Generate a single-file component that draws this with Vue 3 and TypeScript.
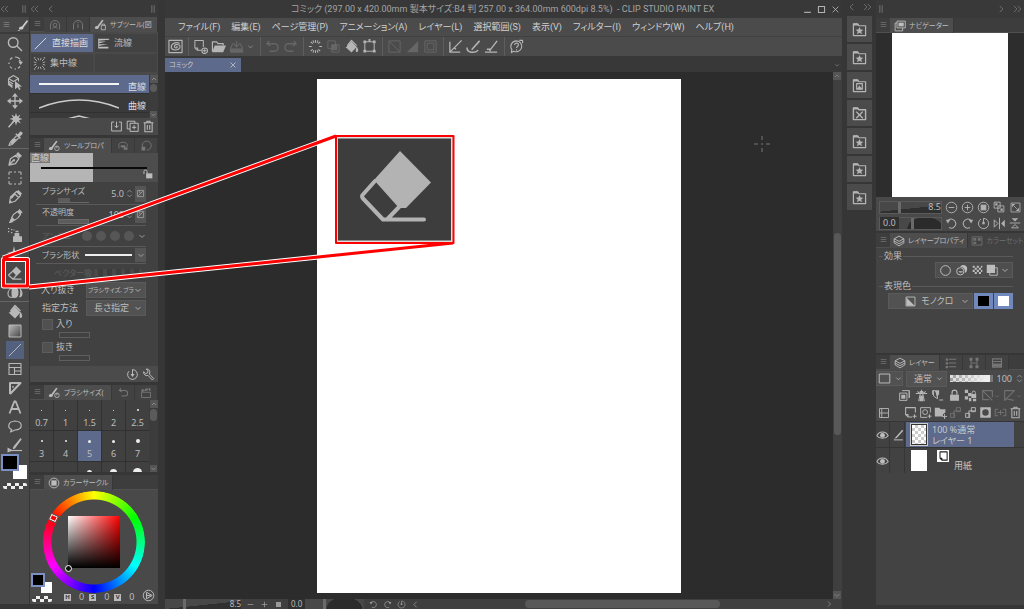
<script setup lang="ts">
import { h, ref } from 'vue'

// Each glyph: stroked path, filled path, stroke width; drawn on a 16 x 16 grid.
type Glyph = [string, string?, number?]

const glyphs: Record<string, Glyph> = {
  search: ['M11 6.5a4.8 4.8 0 1 1-9.6 0a4.8 4.8 0 1 1 9.6 0M10 10l5 5', '', 1.4],
  rotate: ['M12.9 4.2A6 6 0 0 0 8 2M5.4 2.6A6 6 0 0 0 3 4.6M2 7.500V9M3 11.500A6 6 0 0 0 5 13.300M7.500 14H9M11 13.200A6 6 0 0 0 13 11.300', 'M11.500 6.800h4.500L13.700 10zM12.500 4.500l3 2.500h-4z', 1.2],
  cubeArrow: ['M1.500 4.500L6.500 1.500l5 3v3M1.500 4.500l5 3l5-3M1.500 4.500v6l4 3M1.500 7l4.500 3M1.500 9l4 3', 'M8 7l7 5.500l-3 .3l1.600 2.400l-1.500.8l-1.400-2.700L8 15.300z', 1.1],
  move: ['M8 2.500v11M2.500 8h11', 'M8 0l3 3.700H5zM8 16l3-3.700H5zM0 8l3.700-3v6zM16 8l-3.700-3v6z', 1.3],
  wand: ['M8 8L1.500 15.300', 'M9 1l1.200 3.400L13.500 2.500l-1.800 3.300L15.500 7l-3.600 1.200l1.900 3.300l-3.500-1.800L9 13.500L7.800 9.800L4.500 11l1.600-3L2.500 7l3.600-1.200L4.300 2.500l3.500 1.900z', 1.5],
  picker: ['M9.500 5L3.300 11.200L2 14.500l3-1L11.500 7', 'M8.200 3.200l1.200-1l1.300 1.200l2-2.300a1.700 1.700 0 0 1 2.400 2.400L12.800 5.600L14 7l-1.200 1zM5 8h5L5.500 12.800L3.500 13z', 1.2],
  nib: ['M2 14l1.500-6.300L8.700 4.300l3.200 3.300L8.500 12.600zM2 14l4.500-4.700', 'M9 3.600L11 1l4 4l-2.500 2zM6 8.200h2v2H6z', 1.3],
  marquee: ['M2 5V2h3M7 2h2M11 2h3v3M14 7v2M14 11v3h-3M9 14H7M5 14H2v-3M2 9V7', '', 1],
  pencil: ['M2.500 14l1-6L9.500 2.500l4 4L8 12.300zM7.500 4.500l4 4', 'M2.500 14l.6-3l2.200 2.200zM9.500 2.500L11.400 1L15 4.500l-1.500 2zM3.500 8l4-3.500l1 1L4.500 10z', 1.2],
  brush: ['M4.800 9.500c.8-2 3-4.500 5.700-6l3 3c-1.500 2.700-4 4.900-6 5.700z', 'M4.700 9.600l2.700 2.600c-1 2-3.500 2.800-5.600 2.800c1-1.200.8-3 2.900-5.400zM10.500 3.500l1.900-2.500l3.200 3.200l-2.300 2z', 1.2],
  spray: ['M6 12h9', 'M7.500 6h4.800v3.200H15V15H6V9.200h1.500zM8.500 3.800h3v1.500h-3zM1 1h1.300v1.300H1zM4 2h1.300v1.300H4zM1 4h1.300v1.300H1zM4 5h1.300v1.300H4zM6.500 2.500h1v1h-1z', .6],
  sparkle: ['', 'M7 0l1.300 5.500L14 7L8.300 8.500L7 14L5.700 8.500L0 7l5.700-1.500zM12.500 10l.7 2.300L15.500 13l-2.300.7l-.7 2.300l-.7-2.300L9.500 13l2.300-.7z'],
  eraser: ['M6 6L1.500 10L6 14.200L9.700 10M6 14.200h8.500', 'M9.200 1.500L14.300 6.500L9.700 11L5 6z', 1.2],
  blend: ['M6.500 3.500C3 4 1 7 1 9.800C1 13 3.500 14 6 13', 'M6 3c4-.5 5.500 1.800 5.500 5.500S10 14 7.500 14S4.500 12 4.500 9S4.500 4.500 6 3zM12.500 4c2 1 3.200 3.500 3 6s-1.500 3.500-3.500 3.300c1.500-2.500 1.600-6.500.5-9.300z', 1.1],
  bucket: ['M3.500 7L8 1.500l5.500 5.500', 'M1.500 8.500h12L8 14.500zM8 2.500l5.500 6H2.500zM13.500 8c2 2.300 2.200 5 .8 5.800s-2.200-1-1.600-3z', 1.3],
  gradient: ['M2 2h12v12H2z', '', 1],
  lineTool: ['M2 14L14 2', '', 1],
  frame: ['M2 2.500h12v11H2zM2 6.500h12M7.500 6.500v7M7.500 10H14', '', 1.1],
  ruler: ['M3 14V3h10.500L3 14M6 6.300V7.500', '', 2],
  letter: ['M2.500 14.500L7.300 2.500h1.400l4.800 12M4.500 10h7', '', 1.8],
  balloon: ['M4.700 11.500C.3 10 .5 3.500 8 3c8.300.5 8.300 8.500 0 9l-4.500 2z', '', 1.2],
  lineFix: ['M1.500 13.500H15', 'M13.500 1l1.200 1.200L8 11.500l-2.200.7l.5-2.500zM.5 10.500v5l5.500-2z', 1.2],
  pen: ['M1 15.500l3-.6', 'M2.500 13.500c0-3 2-4 4-3.500l6.500-8.500l2 1.200L8.800 11c0 3-2.800 3.700-6.300 2.500z', 1],
  knobPen: ['M13.800 11.500a2.800 2.800 0 1 1-5.600 0a2.800 2.800 0 1 1 5.600 0M11 8.500v3', 'M1 13c0-2.300 1.400-3.300 3-3L10 2l1.800 1.200L6 11c0 2.500-2.400 3-5 2z', 1],
  bagPen: ['M9 9h5v5.500H9zM10 9V7.500h3V9', 'M1 13c0-2.300 1.400-3.300 3-3L10 2l1.800 1.200L6 11c0 2.500-2.400 3-5 2z', 1],
  menu: ['M3 4.500h10M3 8h10M3 11.500h10', '', 1],
  info: ['M2 14V8a6 6 0 0 1 12 0v6M8 7v5M8 4v1.500', '', 1.3],
  head: ['M2 14V8a6 6 0 0 1 12 0v6M10.500 8a2.500 2.500 0 1 1-5 0a2.500 2.500 0 1 1 5 0M4.500 13l2-2h3l2 2', '', 1.2],
  flow: ['M2 2v12', 'M2 2h13v1.500L2 4.500zM2 5.500h9L2 8zM2 9h11L2 11zM2 12h12v2H2z', 1],
  burst: ['M2 2l3 3M14 2l-3 3M2 14l3-3M14 14l-3-3M6 1l1 3M10 1L9 4M6 15l1-3M10 15l-1-3M1 6l3 1M1 10l3-1M15 6l-3 1M15 10l-3-1M1 1h2M13 1h2M1 15h2M13 15h2', '', 1],
  importBox: ['M5 2.500H2v11h12v-11h-3M8 2v7M5.500 7L8 9.500L10.500 7', '', 1.2],
  duplicate: ['M5 4h10v10H5zM11 4V1.500H1.500V11H5M10 6.500v5M7.500 9h5', '', 1.2],
  trash: ['M2 3.500h12M6 3.500v-2h4v2M3.500 4v10.500h9V4M6.500 6v6M9.500 6v6', '', 1.3],
  up: ['M4 10l4-4l4 4', '', 1.5],
  down: ['M3 6l5 5l5-5', '', 1.7],
  updown: ['M4 6l4-4l4 4M4 10l4 4l4-4', '', 1.5],
  left: ['M10 3L5 8l5 5', '', 1.4],
  right: ['M6 3l5 5l-5 5', '', 1.4],
  dleft: ['M7 3L2 8l5 5M13 3L8 8l5 5', '', 1.3],
  dright: ['M3 3l5 5l-5 5M9 3l5 5l-5 5', '', 1.3],
  grip: ['M5.500 2v12M8 2v12M10.500 2v12', '', 1],
  lock: ['M1.500 8V4a2.500 2.500 0 0 1 5 0v4', 'M5 7h10v8H5z', 1.5],
  dynamic: ['M2.500 2.500h11v11h-11zM4 12l8-8M5 5h2v2', '', 1.3],
  reset: ['M3.500 4A6 6 0 1 0 8 2M8 2v7', 'M5.500 7.500h5L8 11z', 1.2],
  wrench: ['M9 7.500l5.500 5.500l-1.700 1.800L7.500 9.200C4.500 10 1.500 8 2 4.500L4.500 7L7 5.800L7.300 3L5 1.500c3-1 6 2 4 6z', '', 1.2],
  undo: ['M4.500 2L2 5l3.500 2.500M2.500 5H10a4 4 0 0 1 0 8H5', '', 1.5],
  redo: ['M11.500 2L14 5l-3.500 2.500M13.500 5H6a4 4 0 0 0 0 8h5', '', 1.5],
  clap: ['M2 7h12v7H2zM2 6l11-4', 'M2 3h3v3H2zM7 2h3v3H7zM12 2h2v3h-2z', 1.2],
  wheel: ['M14.500 8A6.500 6.500 0 1 1 1.500 8A6.500 6.500 0 1 1 14.500 8', 'M4.500 4.500h7v7h-7z', 1.2],
  play: ['M14.500 8A6.500 6.500 0 1 1 1.500 8A6.500 6.500 0 1 1 14.500 8M5.500 4l7 4l-7 4zM5.500 8h5', '', 1.2],
  spiral: ['M1 1.500h14v13H1zM12.500 4.500C7 2.500 3 5.500 3.500 9s7.500 3.500 9 .5S11 5.500 8.500 6S6.500 9.500 8.500 9.500S10 8 9 7.800', '', 1.2],
  newPage: ['M9 12H4.500L2 9.500V1.500h9v7M2 9.500h3V12M12.500 10.500v4M10.500 12.500h4M15.500 12.500a3 3 0 1 1-6 0a3 3 0 1 1 6 0', '', 1.1],
  open: ['M1.500 13V3H6l1.500 2H13v2', 'M1 14L4 7h12l-3 7z', 1.3],
  save: ['M1.500 10v4h13v-4M1.500 10L4 5h2M14.500 10L12 5h-2M8 2v6M5.500 6L8 8.500L10.500 6', 'M2 10h12v4H2z', 1.2],
  spinner: ['M8 1v3M8 12v3M1 8h3M12 8h3M3 3l2 2M11 11l2 2M13 3l-2 2M5 11l-2 2M5.300 1.500l1 2.600M10.700 14.500l-1-2.600M10.700 1.500l-1 2.600M5.300 14.500l1-2.600', '', 1.1],
  shapes: ['M2 2h8v8H2zM6 6h8v8H6z', 'M6 6h6v6H6z', 1],
  crop: ['M3 4.500V12M13 4.500V12M4.500 3h7M4.500 13h7', 'M1.500 1.500h3v3h-3zM11.500 1.500h3v3h-3zM1.500 11.500h3v3h-3zM11.500 11.500h3v3h-3zM7 0h2v3H7z', 1.1],
  slash: ['M2 2h12v12H2zM2 2l12 12', '', 1],
  half: ['', 'M14 2v12H2z', .6],
  square: ['M2 2h12v12H2zM4.500 4.500h7v7h-7z', '', 1],
  rulerPen: ['M2 3v11h11M2 14L14.500 1.500M6.500 9l2 2', '', 1.4],
  curvePen: ['M1 9c0 6 8 6.500 12 3M6 11.500L14.500 2', '', 1.6],
  guidePen: ['M1 14h13M3 11h4L14 2M7 11l-1 2', '', 1.5],
  help: ['M8 2A6 5.800 0 1 1 5 13L2.500 14.500L3 11A6 5.800 0 0 1 8 2M6 6.500C6 3.500 10.500 4 10 6.500C9.800 8 8 8 8 9.500M8 11v1.200M11 1.500h3.500v3', '', 1.2],
  folderStar: ['M1.500 14.500V2H6l1.500 2h7v10.500z', 'M8 5.300l1.200 2.600l2.900.3l-2.200 1.900l.7 2.900L8 11.500L5.400 13l.7-2.900l-2.200-1.900l2.900-.3zM1.500 1.500H6l1.500 2.200h-6z', 1.3],
  folderImage: ['M1.500 14.500V2H6l1.500 2h7v10.500zM5 6h6v6H5z', 'M5 12l3-4l3 4zM1.500 1.500H6l1.500 2.200h-6z', 1.3],
  folderX: ['M1.500 14.500V2H6l1.500 2h7v10.500zM4.500 6l7 7M11.500 6l-7 7', 'M1.500 1.500H6l1.500 2.200h-6z', 1.5],
  navi: ['M4 1.500h11v9H4zM4 4H1.500v10.500h10v-4', 'M6 3.500h7v5H6z', 1.2],
  minus: ['M14.500 8A6.500 6.500 0 1 1 1.500 8A6.500 6.500 0 1 1 14.500 8M4.500 8h7', '', 1.2],
  plus: ['M14.500 8A6.500 6.500 0 1 1 1.500 8A6.500 6.500 0 1 1 14.500 8M4.500 8h7M8 4.500v7', '', 1.2],
  pminus: ['M3 8h10', '', 1.4],
  pplus: ['M3 8h10M8 3v10', '', 1.4],
  psquare: ['', 'M3.500 3.500h9v9h-9z'],
  fitAll: ['M1.500 1.500h8v8h-8zM6.500 6.500h8v8h-8z', 'M3 3h3v3H3zM10 10h3v3h-3z', 1.2],
  fit: ['M1.500 1.500h13v13h-13zM6 6l4 4', 'M3 3h4.500L3 7.500zM13 13H8.500L13 8.500z', 1.2],
  ccw: ['M4 4a5.500 5.500 0 1 1 1 9', 'M1 3.500h5.500L3.500 8z', 1.3],
  cw: ['M12 4a5.500 5.500 0 1 0-1 9', 'M15 3.500H9.500L12.500 8z', 1.3],
  target: ['M5 2.500A6.300 6.300 0 1 0 8 1.700v6', 'M6.500 6h3v3h-3z', 1.2],
  flipH: ['M8 1v14M1.500 3.500v9L6 8z', 'M14.500 3.500v9L10 8z', 1.2],
  flipV: ['M1 8h14M3.500 14.500h9L8 10z', 'M3.500 1.500h9L8 6z', 1.2],
  layers: ['M1.500 5L8 1.500L14.500 5L8 8.500zM1.500 5v5.500L8 14.500l6.500-4V5M1.500 8L8 11.500L14.500 8', '', 1.2],
  palette: ['M1.500 2.500h13v11h-13z', 'M3 4h4v3.500H3zM9 4h4v3.500H9zM3 9h4v3H3z', 1.2],
  circle: ['M14 8A6 6 0 1 1 2 8A6 6 0 1 1 14 8', '', 1.2],
  twoCircles: ['M11 9A4.500 4.500 0 1 1 2 9A4.500 4.500 0 1 1 11 9', 'M15 6.500A4.800 4.800 0 0 1 11.800 11A5.500 5.500 0 0 0 6.200 3.500A4.800 4.800 0 0 1 15 6.500zM10 9A3.500 3.500 0 0 1 4 9z', 1.2],
  checker: ['', 'M1 1h3v3H1zM7 1h3v3H7zM4 4h3v3H4zM10 4h3v3h-3zM1 7h3v3H1zM7 7h3v3H7zM4 10h3v3H4zM10 10h3v3h-3zM13 1h2v3h-2zM13 7h2v3h-2z'],
  shadow: ['M5 5h10v10H5z', 'M1 1h11v11H1z', 1.2],
  mono: ['M1.500 1.500h13v13h-13z', 'M2 2l12 12H2z', 1.3],
  list: ['M5 3h10M5 8h10M5 13h10', 'M1 2h3v3H1zM1 7h3v3H1zM1 12h3v3H1z', 1.3],
  nodes: ['M4 4v8M12 4v8M4 8h8', 'M2 1h4v4H2zM10 1h4v4h-4zM2 11h4v4H2zM10 11h4v4h-4z', 1.2],
  drawer: ['M2 2.500h12v11H2zM2 6h12M2 9.500h12', 'M2 10h12v3H2z', 1.4],
  rect: ['M1.500 2.500h13v11h-13z', '', 1.2],
  clip: ['M5 2h9v9M2 5h9v9H2z', 'M4 7h5v5H4zM13 2h1v9h-1z', 1.2],
  tower: ['M8 1v3M1 5.500h14M6.500 6l-2 9M9.500 6l2 9M3 3l2 2M13 3l-2 2', 'M6 2.500h4l1 3H5zM6.500 8h3l1 7h-5z', 1.3],
  draft: ['M2 2l1.500 7L8 12V6L5 2zM10 13.500h5', 'M5 1.500h5v5l-3 3zM1.500 2h2v5h-2z', 1.2],
  padlock: ['M5 7V4.500a3 3 0 0 1 6 0V7', 'M2.500 7h11v7.500h-11z', 1.5],
  lockPixel: ['M10 6V4.500a2 2 0 0 1 4 0V6', 'M1 1h4v4H1zM5 5h4v4H5zM1 9h4v4H1zM9 6h6v5H9zM6 11h3v4H6zM11 12h4v3h-4z', 1.2],
  maskOff: ['M2 2h12v8M10 13H2V2l12 12', '', 1.4],
  rulerOff: ['M2 2h12L2 14zM4 12l9 2', '', 1.4],
  twoPane: ['M2 2h12v12H2zM2 8h12M5 2v12', '', 1.2],
  newLayer: ['M10 13.500H5L2 10.500V2h12v6M2 10.500h3v3M13 10v5M10.500 12.500h5', '', 1.3],
  newVector: ['M10 14H2V2h12v6M13 10v5M10.500 12.500h5M10.500 7.500a3 3 0 1 1-6 0a3 3 0 1 1 6 0', '', 1.2],
  newFolder: ['M13 10v6M10 13h6', 'M1 2h5.500L8 4h6v4l-3 2v3H1z', 1.2],
  transfer: ['M6 6h8M6 6v8M2 9h5v5H2zM9 2h5v5H9z', '', 1.2],
  mask: ['', 'M1.500 1.500h13v13h-13zM12 8A4 4 0 1 0 4 8A4 4 0 1 0 12 8z'],
  merge: ['M5 4H1.500v8H5M11 4h3.500v8H11M4 8h8M8 5v6', '', 1.3],
  eye: ['M1 9.500C4 3.500 12 3.500 15 9.500C12 13.500 4 13.500 1 9.500', 'M11 9A3 3 0 1 1 5 9A3 3 0 1 1 11 9', 1.3],
  stroke: ['M2.500 14.500h12', 'M13.500 1l1.500 1.200L6.500 12l-3.500 1z', 1.3],
  page: ['M5 2.500h8.500v11H6.500L4 11V2.500zM4 11h2.500v2.500', '', 1.4],
  close: ['M3 3l10 10M13 3L3 13', '', 1.5],
  minimise: ['M2 13h12', '', 2],
  maximise: ['M2.500 2.500h11v11h-11z', '', 1.8],
  cloud: ['M3 11C1 5 4 3 8 3s7 2 5 7', 'M5 7h6v3h3v3H9v-3H5z', 1.2],
  bubble: ['M5 12A6 6 0 1 1 9 13.500', 'M2 9h5v5H2z', 1.2],
}

const Ico = (p: { n: string; s?: number }) => {
  const [line, solid, w] = glyphs[p.n]
  const s = p.s ?? 14
  return h('svg', { class: 'ico', width: s, height: s, viewBox: '0 0 16 16', 'aria-hidden': 'true' }, [
    solid ? h('path', { d: solid, fill: 'currentColor', 'fill-rule': 'evenodd' }) : null,
    line ? h('path', { d: line, fill: 'none', stroke: 'currentColor', 'stroke-width': w ?? 1.2, 'stroke-linejoin': 'round' }) : null,
  ])
}
Ico.props = ['n', 's']

const toolGroups: [string, string][][] = [
  [['search', '虫めがね'], ['rotate', '回転'], ['cubeArrow', '操作'], ['move', 'レイヤー移動'], ['wand', '自動選択'], ['picker', 'スポイト']],
  [['nib', 'ペン'], ['marquee', '選択範囲'], ['pencil', '鉛筆'], ['brush', '筆'], ['spray', 'エアブラシ'], ['sparkle', 'デコレーション'], ['eraser', '消しゴム'], ['blend', '色混ぜ']],
  [['bucket', '塗りつぶし'], ['gradient', 'グラデーション'], ['lineTool', '図形'], ['frame', 'コマ枠'], ['ruler', '定規'], ['letter', 'テキスト'], ['balloon', 'フキダシ'], ['lineFix', '線修正']],
]
const activeTool = ref('lineTool')

const menus = ['ファイル(F)', '編集(E)', 'ページ管理(P)', 'アニメーション(A)', 'レイヤー(L)', '選択範囲(S)', '表示(V)', 'フィルター(I)', 'ウィンドウ(W)', 'ヘルプ(H)']
const commandGroups: [string, boolean][][] = [
  [['spiral', true]],
  [['newPage', true], ['open', true], ['save', false], ['down', false]],
  [['undo', false], ['redo', false]],
  [['spinner', true], ['shapes', false], ['bucket', true], ['crop', true]],
  [['slash', false], ['half', false], ['square', false]],
  [['rulerPen', true], ['curvePen', true], ['guidePen', true]],
  [['help', true]],
]
const materials = ['folderStar', 'folderStar', 'folderImage', 'folderX', 'folderStar', 'folderStar', 'folderStar']
const brushSizes = [
  ['0.7', 1], ['1', 1], ['1.5', 1], ['2', 1], ['2.5', 2],
  ['3', 2], ['4', 2], ['5', 3], ['6', 3], ['7', 4],
] as [string, number][]
const nextSizes = [0, 0, 5, 7, 9]
const brushSize = ref('5')
const statusRow: [string, boolean][] = [['clip', true], ['tower', true], ['draft', true], ['padlock', true], ['lockPixel', true], ['maskOff', false], ['rulerOff', false]]
const layerRow: [string, boolean][] = [['newLayer', true], ['newVector', true], ['newFolder', true], ['transfer', false], ['transfer', true], ['mask', true], ['merge', false], ['trash', true]]
</script>

<template>
  <div class="app">
    <aside class="tools">
      <div class="strip"><Ico n="dleft" :s="10" /><Ico n="grip" :s="10" /></div>
      <div class="tool-tab"><Ico n="menu" :s="9" /><Ico n="pen" :s="12" /></div>
      <div v-for="(group, i) in toolGroups" :key="i" class="tool-group">
        <button v-for="[icon, label] in group" :key="icon" :class="[icon, { on: activeTool === icon }]" :aria-label="label" @click="activeTool = icon">
          <Ico :n="icon" :s="16" />
        </button>
      </div>
      <div class="chips"><i class="fore"></i><i class="back"></i></div>
      <div class="clear-chip"></div>
    </aside>

    <aside class="left">
      <div class="strip"><Ico n="dleft" :s="10" /><Ico n="left" :s="10" /><span class="grow"></span><Ico n="grip" :s="10" /></div>

      <section class="panel subtool">
        <div class="tabs">
          <span class="burger"><Ico n="menu" :s="9" /></span>
          <button class="tab mini" aria-label="素材"><Ico n="head" :s="12" /></button>
          <button class="tab mini" aria-label="情報"><Ico n="info" :s="12" /></button>
          <button class="tab on wide"><Ico n="bagPen" :s="13" />サブツール(図</button>
        </div>
        <div class="groups">
          <button class="on"><Ico n="lineTool" :s="15" />直接描画</button>
          <button><Ico n="flow" :s="13" />流線</button>
          <button><Ico n="burst" :s="13" />集中線</button>
          <span></span>
        </div>
        <div class="sublist">
          <div class="items">
            <button class="on"><svg width="80" height="14" viewBox="0 0 80 14"><path d="M0 7h80" /></svg><b>直線</b></button>
            <button><svg width="80" height="14" viewBox="0 0 80 14"><path class="thin" d="M0 12Q40-4 80 12" /></svg><b>曲線</b></button>
            <button aria-label="折れ線"><svg width="80" height="14" viewBox="0 0 80 14"><path class="thin" d="M16 7L40 1l24 6" /></svg></button>
          </div>
          <div class="scroll"><Ico n="up" :s="8" /><i></i><Ico n="down" :s="7" /></div>
        </div>
        <div class="foot"><Ico n="importBox" :s="13" /><Ico n="duplicate" :s="13" /><Ico n="trash" :s="13" /></div>
      </section>

      <section class="panel props">
        <div class="tabs">
          <span class="burger"><Ico n="menu" :s="9" /></span>
          <button class="tab on wide"><Ico n="knobPen" :s="13" />ツールプロパ</button>
          <button class="tab mini" aria-label="履歴"><Ico n="cloud" :s="12" /></button>
          <button class="tab mini" aria-label="色"><Ico n="bubble" :s="12" /></button>
        </div>
        <div class="preview"><b>直線</b><i></i><Ico n="lock" :s="10" /></div>
        <div class="rows">
          <div class="prow"><label for="bs">ブラシサイズ</label><input id="bs" class="num" value="5.0" /><Ico class="spin" n="updown" :s="9" /><button class="dyn" aria-label="影響元"><Ico n="dynamic" :s="9" /></button><span class="gauge short"></span></div>
          <div class="prow"><label for="op">不透明度</label><input id="op" class="num" value="100" /><Ico class="spin" n="updown" :s="9" /><button class="dyn" aria-label="影響元"><Ico n="dynamic" :s="9" /></button><span class="gauge full"></span></div>
          <div class="prow dim"><span class="name">アンチエ</span><i class="dot"></i><i class="dot"></i><i class="dot"></i><i class="dot"></i><Ico n="down" :s="8" /></div>
          <div class="prow shape"><span class="name">ブラシ形状</span><i class="sample"></i><button class="dyn" aria-label="形状"><Ico n="down" :s="8" /></button></div>
          <div class="prow dim vector"><span class="name">ベクター吸</span><i class="ticks"></i></div>
          <div class="prow sel"><label for="io">入り抜き</label><span class="pick"><select id="io" class="tiny"><option>ブラシサイズ, ブラ</option></select><Ico n="down" :s="8" /></span></div>
          <div class="prow sel"><label for="sp" class="inner">指定方法</label><span class="pick"><select id="sp" class="mid"><option>長さ指定</option></select><Ico n="down" :s="8" /></span></div>
          <div class="check"><label><input type="checkbox" />入り</label><i></i></div>
          <div class="check"><label><input type="checkbox" />抜き</label><i></i></div>
        </div>
        <div class="foot"><Ico n="reset" :s="13" /><Ico n="wrench" :s="13" /></div>
      </section>

      <section class="panel sizes">
        <div class="tabs">
          <span class="burger"><Ico n="menu" :s="9" /></span>
          <button class="tab on wide"><Ico n="knobPen" :s="13" />ブラシサイズ(</button>
          <button class="tab mini" aria-label="履歴"><Ico n="undo" :s="11" /></button>
          <button class="tab mini" aria-label="アニメーション"><Ico n="clap" :s="12" /></button>
        </div>
        <div class="size-body">
          <div class="size-grid">
            <button v-for="[name, d] in brushSizes" :key="name" :class="{ on: brushSize === name }" @click="brushSize = name">
              <i :style="{ width: d + 'px', height: d + 'px' }"></i><span>{{ name }}</span>
            </button>
            <button v-for="(d, i) in nextSizes" :key="'next' + i" aria-label="ブラシサイズ">
              <i :style="{ width: d + 'px', height: d + 'px' }"></i>
            </button>
          </div>
          <div class="scroll"><Ico n="up" :s="8" /><i class="long"></i><Ico n="down" :s="7" /></div>
        </div>
      </section>

      <section class="panel color">
        <div class="tabs">
          <span class="burger"><Ico n="menu" :s="9" /></span>
          <button class="tab on"><Ico n="wheel" :s="12" />カラーサークル</button>
        </div>
        <div class="color-body">
          <div class="circle"><div class="ring"></div><div class="sv"></div><i class="hue-mark"></i><i class="sv-mark"></i></div>
          <div class="color-foot">
            <div class="chip-col"><div class="chips small"><i class="fore"></i><i class="back"></i></div><div class="clear-chip"></div></div>
            <span class="hsv"><b>H</b>0</span><span class="hsv"><b>S</b>0</span><span class="hsv"><b>V</b>0</span>
            <Ico n="play" :s="13" />
          </div>
        </div>
      </section>
    </aside>

    <main class="work">
      <header class="title">
        <h1>コミック (297.00 x 420.00mm 製本サイズ:B4 判 257.00 x 364.00mm 600dpi 8.5%)&nbsp; - CLIP STUDIO PAINT EX</h1>
        <div class="win">
          <button aria-label="最小化"><Ico n="minimise" :s="9" /></button>
          <button aria-label="最大化"><Ico n="maximise" :s="9" /></button>
          <button aria-label="閉じる"><Ico n="close" :s="9" /></button>
        </div>
      </header>
      <nav class="menu"><button v-for="m in menus" :key="m">{{ m }}</button></nav>
      <div class="commands">
        <div v-for="(g, i) in commandGroups" :key="i" class="cgroup">
          <button v-for="[icon, live] in g" :key="icon" :class="{ off: !live, slim: icon === 'down' }" :aria-label="icon">
            <Ico :n="icon" :s="icon === 'down' ? 7 : 15" />
          </button>
        </div>
      </div>
      <div class="docs"><button class="doc">コミック<Ico n="close" :s="8" /></button><span class="grow"></span><Ico n="down" :s="6" /></div>
      <div class="stage">
        <div class="canvas">
          <div class="paper"></div>
          <svg class="cursor" width="18" height="18" viewBox="0 0 18 18"><path d="M9 1v4M9 13v4M1 9h4M13 9h4M9 8v2" /></svg>
        </div>
        <div class="vscroll"><Ico n="up" :s="8" /><i></i><Ico n="down" :s="8" /></div>
      </div>
      <footer class="status">
        <span class="ramp"><i></i><b>8.5</b></span>
        <Ico n="pminus" :s="9" /><Ico n="pplus" :s="9" /><Ico n="psquare" :s="9" />
        <span class="ramp arc"><b>0.0</b><i></i></span>
        <Ico n="ccw" :s="9" /><Ico n="cw" :s="9" /><Ico n="target" :s="9" />
        <Ico n="left" :s="9" />
        <div class="hscroll"><i></i></div>
        <Ico n="right" :s="8" />
      </footer>
    </main>

    <aside class="materials">
      <div class="strip"><Ico n="left" :s="10" /><Ico n="dright" :s="10" /></div>
      <button v-for="(m, i) in materials" :key="i" :aria-label="'素材 ' + (i + 1)"><Ico :n="m" :s="15" /></button>
    </aside>

    <aside class="right">
      <div class="strip"><Ico n="grip" :s="10" /><span class="grow"></span><Ico n="right" :s="10" /><Ico n="dright" :s="10" /></div>

      <section class="panel navigator">
        <div class="tabs"><span class="burger"><Ico n="menu" :s="9" /></span><button class="tab on"><Ico n="navi" :s="12" />ナビゲーター</button></div>
        <div class="nav-view"><div></div></div>
        <div class="nav-ctl">
          <span class="ramp"><i></i><b>8.5</b></span>
          <button aria-label="縮小"><Ico n="minus" :s="13" /></button><button aria-label="拡大"><Ico n="plus" :s="13" /></button><button aria-label="100%"><Ico n="wheel" :s="13" /></button><button aria-label="全体表示"><Ico n="fitAll" :s="12" /></button><button aria-label="フィット"><Ico n="fit" :s="11" /></button>
          <span class="ramp arc"><b>0.0</b><i></i></span>
          <button aria-label="左回転"><Ico n="ccw" :s="13" /></button><button aria-label="右回転"><Ico n="cw" :s="13" /></button><button aria-label="回転をリセット"><Ico n="target" :s="13" /></button><button aria-label="左右反転"><Ico n="flipH" :s="13" /></button><button aria-label="上下反転"><Ico n="flipV" :s="12" /></button>
        </div>
      </section>

      <section class="panel lprop">
        <div class="tabs">
          <span class="burger"><Ico n="menu" :s="9" /></span>
          <button class="tab on"><Ico n="layers" :s="12" />レイヤープロパティ</button>
          <button class="tab faint"><Ico n="palette" :s="12" />カラーセット</button>
        </div>
        <div class="lbody">
          <h2>効果</h2>
          <div class="fx"><Ico n="circle" :s="13" /><Ico n="twoCircles" :s="13" /><Ico n="checker" :s="11" /><Ico n="shadow" :s="12" /><Ico n="down" :s="8" /></div>
          <h2>表現色</h2>
          <div class="mono">
            <span class="pick"><Ico n="mono" :s="11" /><select aria-label="表現色"><option>モノクロ</option></select><Ico n="down" :s="8" /></span>
            <button class="ink" aria-label="黒"></button><button class="ink white" aria-label="白"></button>
          </div>
        </div>
      </section>

      <section class="panel layer">
        <div class="tabs">
          <span class="burger"><Ico n="menu" :s="9" /></span>
          <button class="tab on"><Ico n="layers" :s="12" />レイヤー</button>
          <button class="tab mini" aria-label="検索"><Ico n="list" :s="12" /></button><button class="tab mini" aria-label="コンプ"><Ico n="nodes" :s="12" /></button><button class="tab mini" aria-label="履歴"><Ico n="drawer" :s="12" /></button>
        </div>
        <div class="blend">
          <button class="kind" aria-label="パレットカラー"><Ico n="rect" :s="13" /><Ico n="down" :s="7" /></button>
          <span class="pick"><select aria-label="合成モード" class="mid"><option>通常</option></select><Ico n="down" :s="7" /></span>
          <i class="opacity"></i>
          <input class="num" aria-label="不透明度" value="100" />
          <Ico class="spin" n="updown" :s="9" />
        </div>
        <div class="irow status-row"><template v-for="[n, live] in statusRow" :key="n"><button :class="{ off: !live }" :aria-label="n"><Ico :n="n" :s="13" /><Ico v-if="!live" n="down" :s="6" /></button></template></div>
        <div class="irow"><button aria-label="2ペイン"><Ico n="twoPane" :s="12" /></button><span class="grow"></span><button v-for="([n, live], i) in layerRow" :key="i" :class="{ off: !live }" :aria-label="n"><Ico :n="n" :s="13" /></button></div>
        <div class="lrow on"><span class="cell"><Ico n="eye" :s="13" /></span><span class="cell"><Ico n="stroke" :s="12" /></span><div class="main"><i class="thumb clear"></i><p>100 %通常<br />レイヤー 1</p></div></div>
        <div class="lrow"><span class="cell"><Ico n="eye" :s="13" /></span><span class="cell empty"></span><div class="main"><i class="thumb"></i><span class="sheet"><Ico n="page" :s="12" /></span><p class="name">用紙</p></div></div>
        <div class="fill"></div>
      </section>
    </aside>

    <svg class="callout" width="1024" height="609" viewBox="0 0 1024 609" role="img" aria-label="消しゴムツール">
      <path class="halo" d="M3 258L336 136M29 287L453 243M3.500 259.500h24v26.500h-24zM336 136.500h117v106h-117z" />
      <path class="red" d="M3 258L336 136M29 287L453 243M3.500 259.500h24v26.500h-24z" />
      <path class="plate" d="M337 137.500h115v104H337z" />
      <path class="red thin" d="M336 136h117.500v107H336z" />
      <path class="solid" d="M400 151l31 31.500L406 208h-7l-25-28z" />
      <path class="edge" d="M375 181l-12.500 14q-1 2 .500 3.500L383 219.500h4L400 206M384 219.500h40" />
    </svg>
  </div>
</template>

<style>
body {
  margin: 0;
  background: #383838;
}
</style>

<style scoped>
* { box-sizing: border-box; }
.app {
  position: relative;
  display: flex;
  height: 100vh;
  overflow: hidden;
  background: #363636;
  color: #bdbdbd;
  font: 9px/12px 'Noto Sans', 'Noto Sans CJK JP', sans-serif;
  font-feature-settings: 'palt';
}
button, select, input {
  margin: 0;
  padding: 0;
  border: 0;
  border-radius: 0;
  background: none;
  color: inherit;
  font: inherit;
  font-feature-settings: inherit;
}
button { display: flex; align-items: center; justify-content: center; flex: none; }
select { appearance: none; min-width: 0; }
.ico { display: block; flex: none; }
.grow { flex: 1; }
.strip { display: flex; align-items: center; gap: 6px; height: 17px; flex: none; color: #777; background: #393939; }

/* tool column */
.tools { width: 29px; height: 604px; flex: none; background: #484848; display: flex; flex-direction: column; align-items: stretch; }
.tools .strip { justify-content: space-between; }
.tool-tab { display: flex; justify-content: space-between; align-items: center; height: 17px; padding-left: 2px; color: #999; flex: none; border-bottom: 2px solid #3b3b3b; }
.tool-tab .ico:last-child { color: #ccc; }
.tool-group + .tool-group { border-top: 1px solid #666; }
.tool-group button { width: 100%; height: 19px; color: #b8b8b8; }
.tool-group .gradient .ico { background: linear-gradient(135deg, #bbb, #444) center / 12px 12px no-repeat; }
.tool-group button.on .ico { background: #53617f; outline: 1px solid #53617f; }
.chips { display: grid; grid-template: 1fr / 1fr; width: 26px; height: 25px; margin: 0 0 4px 1px; flex: none; }
.chips i { grid-area: 1 / 1; }
.fore { width: 18px; height: 17px; background: #000; border: 2px solid #7a90c4; z-index: 1; }
.back { width: 14px; height: 14px; background: #fff; align-self: end; justify-self: end; }
.chips.small { width: 21px; height: 20px; margin: 0 0 3px; }
.small .fore { width: 14px; height: 14px; }
.small .back { width: 11px; height: 11px; }
.clear-chip {
  height: 6px;
  width: 24px;
  margin-left: 3px;
  border-radius: 2px;
  background: conic-gradient(#eee 25%, #444 0 50%, #eee 0 75%, #444 0) 0 0 / 8px 6px;
  flex: none;
}

/* shared panels */
.left { width: 129px; height: 604px; margin-left: 1px; padding-right: 1px; flex: none; display: flex; flex-direction: column; background: #363636; }
.panel { background: #494949; display: flex; flex-direction: column; flex: none; overflow: hidden; }
.tabs { display: flex; height: 15px; background: #3d3d3d; border-bottom: 1px solid #505050; flex: none; }
.burger { width: 14px; display: flex; justify-content: center; padding-top: 2px; color: #888; flex: none; }
.tab { height: 15px; padding: 0 4px; gap: 3px; justify-content: flex-start; background: #424242; border-right: 1px solid #383838; font-size: 7px; white-space: nowrap; color: #bdbdbd; }
.tab.on { background: #4d4d4d; }
.tab.wide { flex: 1; min-width: 0; padding-right: 0; }
.tab.mini { width: 23px; padding: 0; justify-content: center; color: #777; }
.tab.faint { color: #6f6f6f; }
.foot { display: flex; justify-content: flex-end; align-items: center; gap: 3px; height: 16px; padding-right: 3px; }
.scroll { width: 9px; display: flex; flex-direction: column; align-items: center; background: #3c3c3c; color: #999; flex: none; }
.scroll .ico { background: #555; }
.scroll i { width: 7px; height: 8px; margin: 1px 0 auto; border-radius: 4px; background: #5b5b5b; }
.scroll i.long { height: 12px; }

.subtool { height: 118px; margin-bottom: 3px; }
.groups { display: grid; grid-template-columns: 1fr 1fr; grid-auto-rows: 18px; gap: 2px; padding: 2px 1px 2px; }
.groups > * { background: #424242; justify-content: flex-start; gap: 4px; padding-left: 2px; }
.groups .on { background: #5d6a8b; color: #ddd; }
.sublist { display: flex; height: 43px; margin-top: 1px; background: #303030; overflow: hidden; }
.items { flex: 1; display: flex; flex-direction: column; gap: 1px; }
.items button { width: 100%; height: 18px; padding: 0 3px 0 9px; justify-content: space-between; background: #3a3a3a; }
.items .on { background: #5d6a8b; }
.items b { font-weight: 400; padding-top: 5px; color: #ddd; }
.items path { fill: none; stroke: #f5f5f5; stroke-width: 2; }
.items .thin { stroke-width: 1.4; stroke: #ccc; }

.props { height: 244px; margin-bottom: 3px; background: #414141; }
.preview { display: grid; height: 29px; flex: none; background: linear-gradient(90deg, #b5b5b5 63px, #4d4d4d 63px); align-items: center; }
.preview > * { grid-area: 1 / 1; }
.preview b { align-self: start; justify-self: start; padding: 0 1px; background: #777; color: #ccc; font-weight: 400; line-height: 10px; }
.preview i { height: 2px; margin: 0 11px; background: #0a0a0a; }
.preview .ico { justify-self: end; align-self: end; margin: 0 5px 3px; }
.rows { flex: 1; padding: 2px 12px 0 6px; }
.prow { display: grid; grid-template-columns: 1fr 22px 9px 11px; column-gap: 1px; height: 21px; border-bottom: 1px solid #5a5a5a; padding-left: 6px; align-items: center; align-content: start; }
.prow label, .prow .name { font-size: 8px; line-height: 14px; white-space: nowrap; }
.num { width: 100%; text-align: right; min-width: 0; }
.spin { color: #999; }
.dyn { width: 11px; height: 16px; background: #555; color: #aaa; }
.prow > .num { grid-area: 1 / 2 / 3 / 3; }
.prow > .spin { grid-area: 1 / 3 / 3 / 4; }
.prow > .dyn { grid-area: 1 / 4 / 3 / 5; }
.gauge { grid-column: 1; grid-row: 2; width: 31px; height: 5px; margin-left: 16px; border-bottom: 1px solid #686868; }
.gauge.short { background: linear-gradient(90deg, #5c5c5c 12px, transparent 12px); }
.gauge.full { background: #5c5c5c; border: 1px solid #686868; }
.prow.dim { grid-template-columns: 36px repeat(4, 10px) 10px; column-gap: 4px; align-content: center; color: #5f5f5f; }
.dot { width: 10px; height: 10px; border-radius: 50%; background: #565656; }
.prow.dim .ico { color: #aaa; }
.prow.shape { height: 16px; grid-template-columns: 40px 1fr 11px; align-content: center; border-bottom: 0; }
.sample { height: 2px; margin: 0 2px; background: #eee; }
.prow.shape > .dyn { grid-area: auto; height: 14px; }
.prow.vector { height: 18px; padding-left: 18px; border-top: 1px solid #5a5a5a; border-bottom: 0; }
.ticks { width: 48px; height: 7px; background: repeating-linear-gradient(90deg, #494949 0 4px, #3d3d3d 4px 9px); }
.prow.sel { height: 18px; padding-left: 2px; grid-template-columns: 47px 1fr; border: 0; align-content: center; }
.prow.sel label { padding-left: 3px; font-size: 9px; }
.prow.sel .inner { padding-left: 4px; }
.pick { display: flex; align-items: center; background: #525252; border: 1px solid #5a5a5a; padding-right: 3px; min-width: 0; height: 16px; }
.pick select { flex: 1; width: 0; height: 14px; padding-left: 1px; }
.pick select.tiny { font-size: 6px; }
.pick select.mid { padding-left: 7px; }
.check { height: 23px; padding: 1px 0 0 6px; }
.check label { display: flex; gap: 3px; align-items: center; height: 12px; }
.check input { appearance: none; width: 11px; height: 11px; background: #505050; border: 1px solid #5c5c5c; }
.check i { display: block; width: 31px; height: 6px; margin: 2px 0 0 17px; border: 1px solid #5e5e5e; }
.props .foot { background: #4b4b4b; flex: none; }

.sizes { height: 87px; margin-bottom: 3px; }
.size-body { flex: 1; display: flex; min-height: 0; background: #3e3e3e; }
.size-grid { flex: 1; display: grid; grid-template-columns: repeat(5, 1fr); grid-auto-rows: 30px; gap: 1px; background: #313131; overflow: hidden; }
.size-grid button { display: grid; grid-template-rows: 16px 10px; justify-items: center; align-items: center; align-content: center; background: #404040; line-height: 10px; }
.size-grid i { border-radius: 50%; background: #eee; }
.size-grid .on { background: #5d6a8b; }

.color { flex: 1; }
.color-body { flex: 1; display: grid; }
.circle { grid-area: 1 / 1; position: relative; width: 102px; height: 102px; margin-top: 1px; justify-self: center; }
.ring { width: 102px; height: 102px; border-radius: 50%; background: conic-gradient(from 300deg, red, #ff0, lime, cyan, blue, magenta, red); mask: radial-gradient(circle, transparent 42px, #000 43px); }
.sv { position: absolute; left: 25px; top: 25px; width: 52px; height: 52px; background: linear-gradient(transparent, #000), linear-gradient(90deg, #fff, red); }
.hue-mark { position: absolute; left: 7px; top: 24px; width: 7px; height: 6px; background: red; border: 1px solid #fff; outline: 1px solid #555; transform: rotate(25deg); }
.sv-mark { position: absolute; left: 22px; top: 74px; width: 7px; height: 7px; border: 1px solid #fff; border-radius: 50%; background: #111; }
.color-foot { grid-area: 1 / 1; align-self: end; z-index: 1; display: flex; align-items: flex-end; gap: 5px; padding: 0 3px 2px 1px; }
.chip-col { margin-right: 7px; }
.chip-col .clear-chip { width: 20px; margin-left: 1px; }
.hsv { display: flex; align-items: center; gap: 8px; height: 10px; }
.hsv b { width: 7px; font-size: 6px; line-height: 7px; text-align: center; background: #bbb; color: #333; }
.color-foot > .ico { margin-left: auto; }

/* work area */
.work { flex: 1; min-width: 0; margin: 0 5px 0 6px; display: flex; flex-direction: column; background: #383838; }
.title { display: flex; height: 18px; align-items: center; flex: none; }
.title h1 { flex: 1; margin: 0 0 0 38px; text-align: center; font-family: Roboto, 'Noto Sans CJK JP', sans-serif; font-size: 9px; font-weight: 400; color: #a3a3a3; white-space: nowrap; }
.win { display: flex; gap: 4px; padding-right: 2px; color: #b5b5b5; }
.win button { width: 10px; }
.menu { display: flex; gap: 11px; height: 19px; padding-left: 13px; background: #4b4b4b; border-bottom: 1px solid #414141; flex: none; color: #d0d0d0; white-space: nowrap; font-family: Roboto, 'Noto Sans CJK JP', sans-serif; }
.commands { display: flex; height: 19px; padding-left: 1px; background: #4b4b4b; flex: none; color: #b5b5b5; }
.cgroup { display: flex; align-items: center; gap: 2px; padding: 0 5px 0 3px; }
.cgroup:first-child { padding-left: 1px; }
.cgroup + .cgroup { border-left: 1px solid #5e5e5e; }
.commands button { width: 16px; }
.commands button.slim { width: 9px; color: #999; }
.off { color: #666; }
.docs { display: flex; align-items: flex-end; height: 16px; flex: none; padding-right: 2px; color: #888; }
.docs > .ico { margin-bottom: 4px; }
.doc { width: 76px; height: 14px; padding: 0 4px; justify-content: space-between; background: #5d6a8b; font-size: 7px; color: #ccc; }
.stage { flex: 1; display: flex; min-height: 0; }
.canvas { flex: 1; display: grid; background: #2c2c2c; }
.canvas > * { grid-area: 1 / 1; }
.paper { width: 364px; margin: 7px 0 6px; background: #fff; justify-self: center; }
.cursor { margin: 63px 62px 0 0; justify-self: end; fill: none; stroke: #777; }
.vscroll { width: 9px; display: flex; flex-direction: column; background: #3f3f3f; color: #888; }
.vscroll .ico { background: #555; }
.vscroll i { width: 7px; height: 202px; margin: 153px 1px auto; border-radius: 4px; background: #585858; }
.status { display: flex; align-items: center; gap: 5px; height: 10px; flex: none; padding-right: 9px; background: #3f3f3f; color: #999; font-size: 8px; line-height: 10px; }
.ramp { display: flex; align-items: center; justify-content: flex-end; width: 76px; height: 10px; color: #bbb; background: linear-gradient(174deg, #484848 55%, #303030 56%); }
.ramp b { font-weight: 400; }
.ramp i { width: 3px; height: 100%; margin-right: auto; margin-left: 18px; background: #6a6a6a; }
.ramp.arc { justify-content: flex-start; background: radial-gradient(ellipse 18px 12px at 74% 100%, #2b2b2b 98%, #484848); }
.ramp.arc b { padding: 0 3px; background: #303030; }
.status .arc i { margin-left: 18px; }
.hscroll { flex: 1; }
.hscroll i { display: block; width: 195px; height: 8px; margin: 0 auto; border-radius: 4px; background: #585858; }

/* material shortcuts */
.materials { width: 25px; flex: none; display: flex; flex-direction: column; gap: 2px; }
.materials .strip { justify-content: space-between; gap: 0; height: 14px; background: #363636; }
.materials button { height: 26px; background: #4b4b4b; color: #b5b5b5; }

/* right column */
.right { width: 148px; height: 605px; flex: none; margin-left: 4px; display: flex; flex-direction: column; }
.right .strip { padding-right: 2px; height: 18px; }
.navigator { height: 213px; margin-bottom: 2px; }
.nav-view { height: 164px; flex: none; display: grid; justify-content: center; background: #2d2d2d; }
.nav-view div { width: 116px; background: #fff; }
.nav-ctl { flex: 1; display: grid; grid-template-columns: 64px repeat(5, 1fr); column-gap: 2px; padding: 2px 2px 0 3px; align-items: center; color: #b0b0b0; }
.nav-ctl .ramp { width: 63px; height: 13px; border: 1px solid #5a5a5a; }
.nav-ctl .arc i { margin-left: 12px; }
.lprop { height: 120px; margin-bottom: 2px; background: #434343; }
.lprop .tab { padding: 0 3px; }
.lbody { padding: 2px 11px 0 3px; }
.lbody h2 { display: flex; align-items: center; gap: 1px; margin: 0; font-size: 9px; line-height: 12px; font-weight: 400; }
.lbody h2::before, .lbody h2::after { content: ''; height: 1px; width: 4px; background: #5a5a5a; }
.lbody h2::after { flex: 1; }
.fx { display: flex; align-items: center; justify-content: space-between; width: 78px; height: 16px; margin: 0 0 2px auto; padding: 0 3px; background: #4e4e4e; border: 1px solid #5a5a5a; }
.mono { display: grid; grid-template-columns: 1fr 19px 19px; gap: 1px; margin: 1px 0 0 9px; }
.mono .pick { padding-left: 16px; gap: 4px; }
.ink { height: 16px; border: 3px solid #7188bd; border-width: 3px 4px; background: #000; }
.ink.white { background: #fff; }

.layer { flex: 1; }
.blend { display: flex; align-items: center; gap: 3px; height: 17px; flex: none; }
.kind { width: 27px; height: 15px; gap: 4px; background: #515151; border: 1px solid #5a5a5a; }
.blend .pick { width: 41px; }
.opacity { flex: 1; height: 7px; border-right: 3px solid #777; background: linear-gradient(90deg, transparent, #eee 90%), conic-gradient(#999 25%, #ddd 0 50%, #999 0 75%, #ddd 0) 0 0 / 6px 6px; }
.blend .num { width: 16px; }
.irow { display: flex; align-items: center; justify-content: space-between; gap: 2px; height: 17px; padding: 0 2px; flex: none; color: #b5b5b5; }
.status-row { padding-left: 22px; }
.irow .off { color: #717171; }
.lrow { display: flex; gap: 1px; height: 26px; border-top: 1px solid #353535; background: #424242; flex: none; }
.cell { width: 14px; display: flex; align-items: center; justify-content: center; border-right: 1px solid #363636; }
.main { flex: 1; display: flex; align-items: center; gap: 5px; padding-left: 5px; margin-right: 10px; }
.lrow.on .main { background: #5d6a8b; }
.thumb { width: 16px; height: 21px; background: #fff; }
.thumb.clear { outline: 1px solid #ccc; border: 1px solid #333; background: conic-gradient(#ccc 25%, #fff 0 50%, #ccc 0 75%, #fff 0) 0 0 / 6px 6px; }
.main p { margin: 0; line-height: 11px; color: #c8c8c8; }
.main p.name { padding-top: 10px; }
.sheet { align-self: flex-start; margin: 2px 0 0 5px; background: #fff; color: #222; }
.fill { flex: 1; background: #434343; }

/* magnified tool callout */
.callout { position: absolute; left: 0; top: 0; z-index: 3; pointer-events: none; fill: none; stroke-linejoin: round; }
.halo { stroke: #fff; stroke-width: 5; }
.red { stroke: #f00; stroke-width: 3; }
.red.thin { stroke-width: 2; }
.plate { fill: #3d3d3d; stroke: #ddd; stroke-width: 2; }
.solid { fill: #b3b3b3; }
.edge { stroke: #b3b3b3; stroke-width: 4; stroke-linecap: round; }
</style>
